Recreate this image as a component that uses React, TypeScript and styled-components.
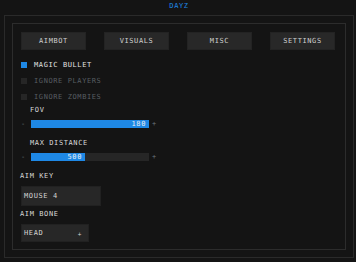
import React from "react";
import styled, { createGlobalStyle } from "styled-components";

const Global = createGlobalStyle`
  html, body { margin: 0; padding: 0; background: #141414; }
  body {
    width: 356px; height: 262px; overflow: hidden;
    font-family: "DejaVu Sans Mono", "Liberation Mono", monospace;
    font-size: 7px; letter-spacing: 0.6px; color: #d0d0d0;
  }
`;

const Page = styled.div`
  width: 356px; height: 262px;
  display: flex; flex-direction: column;
`;

const Title = styled.div`
  height: 15px; line-height: 7px; padding-top: 3px; box-sizing: border-box;
  text-align: center; color: #1e88e5;
  padding-left: 2px;
`;

const OuterFrame = styled.div`
  margin: 0 2px 4px 4px; flex: 1;
  border: 1px solid #2a2a2a; padding: 7px;
  display: flex; flex-direction: column;
`;

const InnerFrame = styled.div`
  flex: 1; border: 1px solid #2c2c2c;
  padding: 8px 9px 0 8px;
  display: flex; flex-direction: column;
`;

const Tabs = styled.div`
  display: grid; grid-template-columns: repeat(4, 65px); column-gap: 18px;
`;

const Tab = styled.div`
  height: 18px; box-sizing: border-box;
  background: #282828; border: 1px solid #232323;
  display: flex; align-items: center; justify-content: center;
  color: #cfcfcf; line-height: 7px;
`;

const Checks = styled.div`
  margin-top: 7px; display: flex; flex-direction: column;
`;

const CheckRow = styled.div<{ $on: boolean }>`
  height: 16px; display: flex; align-items: center; gap: 7px;
  color: ${(p) => (p.$on ? "#e2e2e2" : "#575d62")};
  line-height: 7px;
`;

const Box = styled.span<{ $on: boolean }>`
  width: 6px; height: 6px; display: block;
  background: ${(p) => (p.$on ? "#1e88e5" : "#262626")};
`;

const SliderLabel = styled.div<{ $top: number }>`
  margin-top: ${(p) => p.$top}px; margin-left: 9px; line-height: 7px; height: 7px;
  color: #d8d8d8;
`;

const SliderRow = styled.div`
  margin-top: 6px; height: 8px; display: flex; align-items: center;
`;

const Step = styled.span<{ $ml: number; $mr: number }>`
  width: 5px; margin: 0 ${(p) => p.$mr}px 0 ${(p) => p.$ml}px;
  color: #6a757c; line-height: 7px; font-size: 7px;
  display: flex; justify-content: center;
`;

const Track = styled.div`
  width: 118px; height: 8px; background: #262626; display: flex;
`;

const Fill = styled.div`
  height: 8px; background: #1e88e5;
  display: flex; align-items: center; justify-content: flex-end;
  padding-right: 3px; box-sizing: border-box;
  color: #e9eef2; line-height: 7px;
`;

const FieldLabel = styled.div<{ $top: number }>`
  margin-top: ${(p) => p.$top}px; margin-left: -1px; line-height: 7px; height: 7px;
  color: #d8d8d8;
`;

const Field = styled.div<{ $w: number; $h: number }>`
  margin-top: 6px; width: ${(p) => p.$w}px; height: ${(p) => p.$h}px;
  box-sizing: border-box; background: #272727; border: 1px solid #212121;
  display: flex; align-items: center; justify-content: space-between;
  padding: 0 6px 0 2px; color: #d4d4d4; line-height: 7px;
`;

const Arrow = styled.span`
  color: #d4d4d4; font-size: 6px;
`;

const checks = [
  { label: "MAGIC BULLET", on: true },
  { label: "IGNORE PLAYERS", on: false },
  { label: "IGNORE ZOMBIES", on: false },
];

const sliders = [
  { label: "FOV", value: 180, frac: 1, top: 2 },
  { label: "MAX DISTANCE", value: 500, frac: 54 / 118, top: 12 },
];

export default function App() {
  return (
    <Page>
      <Global />
      <Title>DAYZ</Title>
      <OuterFrame>
        <InnerFrame>
          <Tabs>
            {["AIMBOT", "VISUALS", "MISC", "SETTINGS"].map((t) => (
              <Tab key={t}>{t}</Tab>
            ))}
          </Tabs>
          <Checks>
            {checks.map((c) => (
              <CheckRow key={c.label} $on={c.on}>
                <Box $on={c.on} />
                {c.label}
              </CheckRow>
            ))}
          </Checks>
          {sliders.map((s) => (
            <React.Fragment key={s.label}>
              <SliderLabel $top={s.top}>{s.label}</SliderLabel>
              <SliderRow>
                <Step $ml={0} $mr={5}>-</Step>
                <Track>
                  <Fill style={{ width: `${s.frac * 118}px` }}>{s.value}</Fill>
                </Track>
                <Step $ml={3} $mr={0}>+</Step>
              </SliderRow>
            </React.Fragment>
          ))}
          <FieldLabel $top={12}>AIM KEY</FieldLabel>
          <Field $w={80} $h={20}>MOUSE 4</Field>
          <FieldLabel $top={5}>AIM BONE</FieldLabel>
          <Field $w={68} $h={18}>
            HEAD<Arrow>+</Arrow>
          </Field>
        </InnerFrame>
      </OuterFrame>
    </Page>
  );
}
